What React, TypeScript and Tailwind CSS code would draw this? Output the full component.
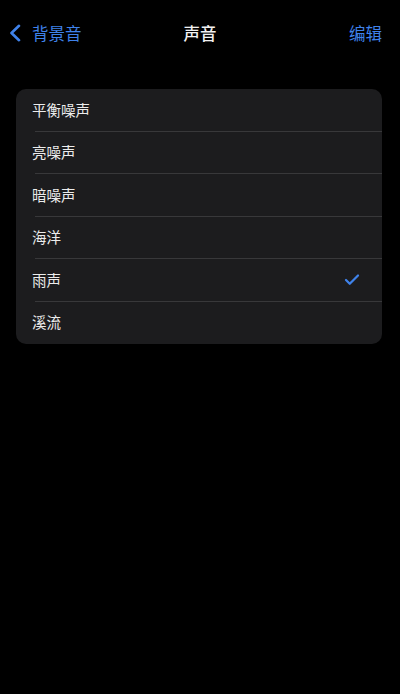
import { Check } from "lucide-react";

const SOUNDS = ["平衡噪声", "亮噪声", "暗噪声", "海洋", "雨声", "溪流"];
const SELECTED = "雨声";

export default function App() {
  return (
    <div
      className="w-[400px] h-[694px] bg-black text-white overflow-hidden"
      style={{ fontFamily: '"Noto Sans CJK SC", "Noto Sans", sans-serif' }}
    >
      {/* Nav bar */}
      <div className="relative flex items-center justify-between h-[30px] mt-[18px] pl-[9px] pr-[18px]">
        <button className="flex items-center text-[#3f82ea]">
          <BackIcon />
          <span className="text-[16.5px] leading-none ml-[11px]">背景音</span>
        </button>
        <h1 className="absolute left-1/2 -translate-x-1/2 text-[16.5px] font-medium leading-none text-[#f2f2f2]">
          声音
        </h1>
        <button className="text-[16.5px] leading-none text-[#3f82ea]">编辑</button>
      </div>

      {/* List */}
      <div className="mx-4 mt-[41px] w-[366px] bg-[#1c1c1e] rounded-[10px] overflow-hidden">
        {SOUNDS.map((s, i) => (
          <div key={s} className="pl-4 h-[42.5px] relative flex items-center">
            <span className="text-[14.5px] text-[#ececec] leading-none -mt-[1px]">{s}</span>
            {s === SELECTED && (
              <Check
                className="absolute right-[21px] w-[18px] h-[18px] text-[#3f82ea]"
                strokeWidth={3}
              />
            )}
            {i < SOUNDS.length - 1 && (
              <div className="absolute bottom-0 left-[19px] right-0 h-px bg-[#38383a]" />
            )}
          </div>
        ))}
      </div>
    </div>
  );
}

function BackIcon() {
  return (
    <svg viewBox="0 0 12 18" fill="none" stroke="currentColor" strokeWidth="2.6" className="w-[12px] h-[18px]">
      <path strokeLinecap="round" strokeLinejoin="round" d="M10 1.8L2.5 9l7.5 7.2" />
    </svg>
  );
}
